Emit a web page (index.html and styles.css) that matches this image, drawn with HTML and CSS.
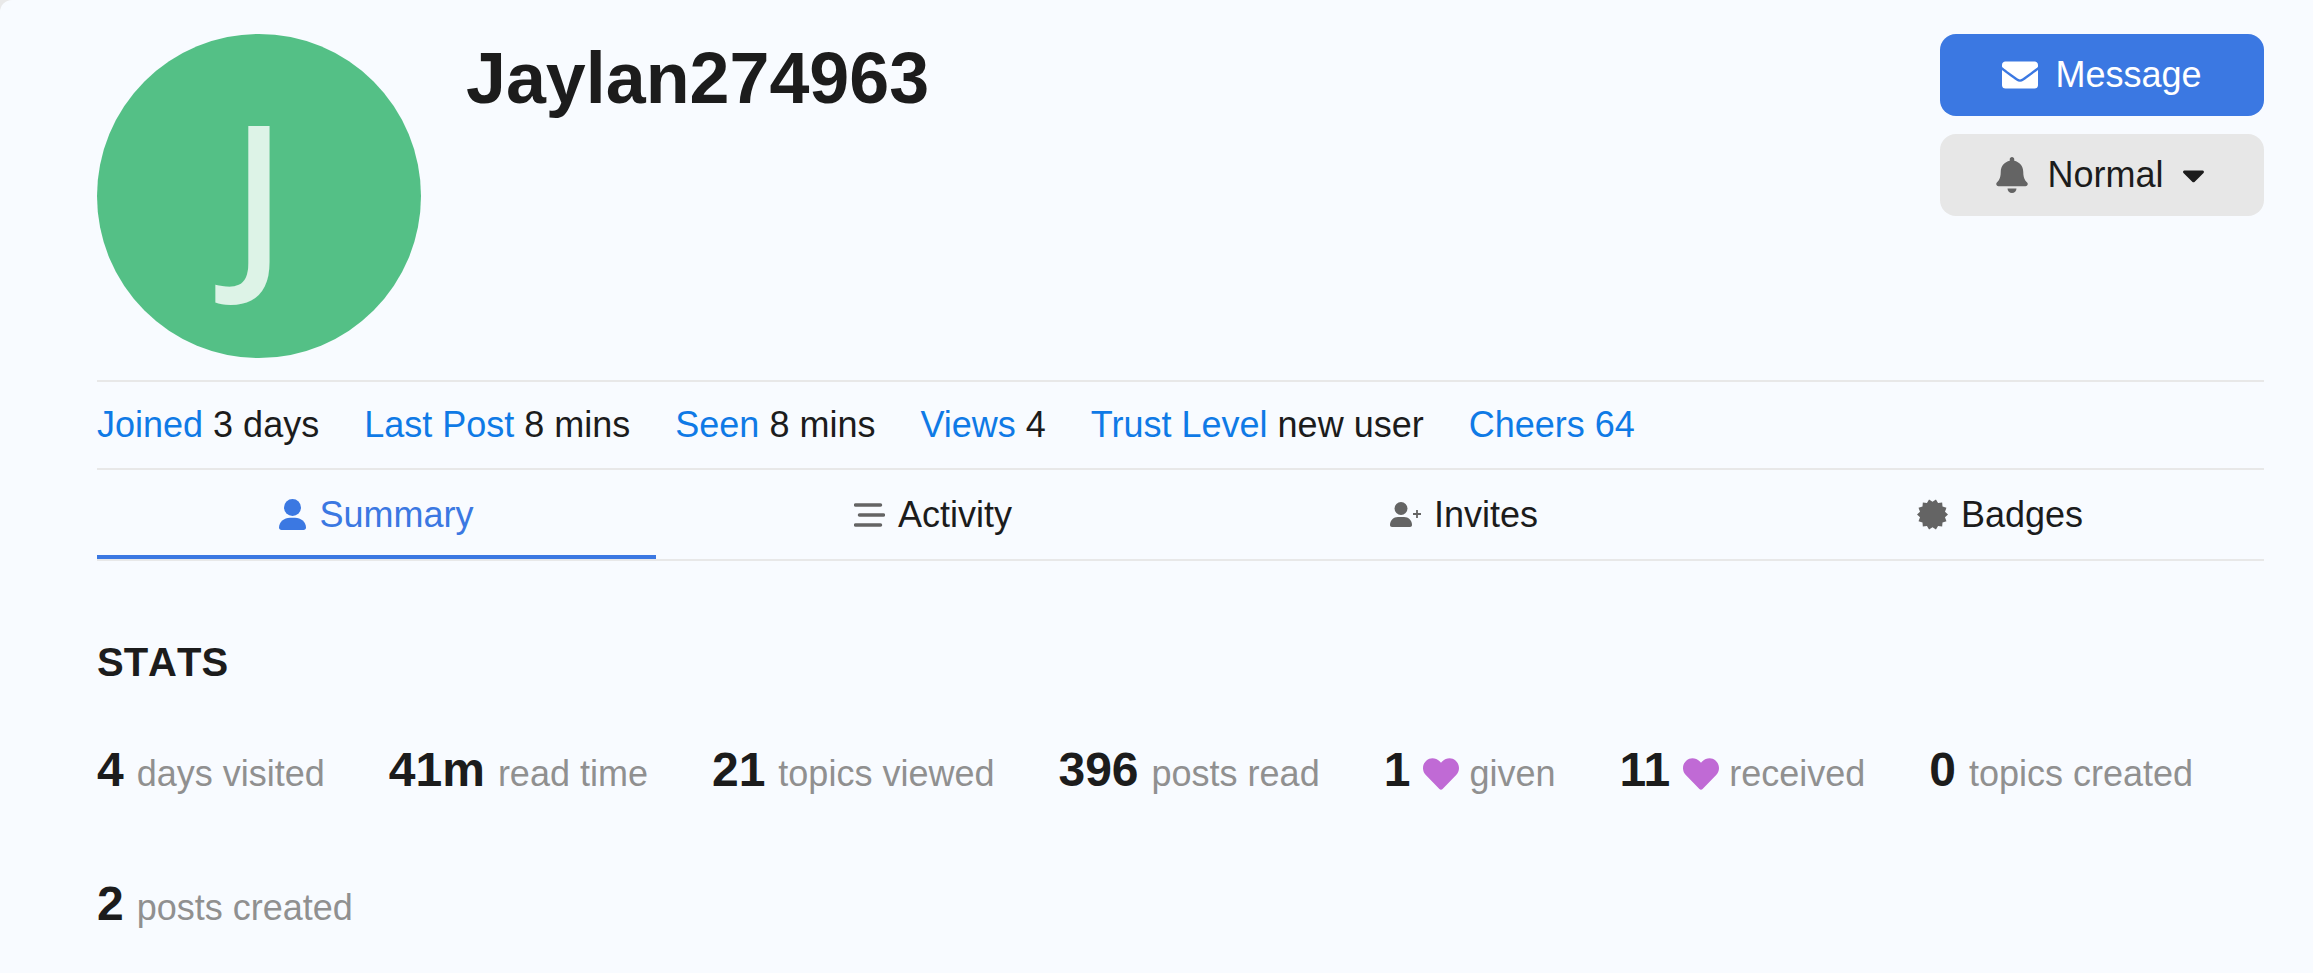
FILE: index.html
```html
<!DOCTYPE html>
<html>
  <head>
    <meta charset="utf-8">
    <title>Jaylan274963</title>
    <link rel="stylesheet" href="styles.css">
  </head>
  <body>
    <div class="page">
      <div class="profile-head">
        <div class="avatar">J</div>
        <h1 class="username">Jaylan274963</h1>
        <div class="actions">
          <button class="btn btn-primary">
            <svg class="btn-icon" viewBox="0 0 512 512"><path d="M502.3 190.8c3.9-3.1 9.7-.2 9.7 4.7V400c0 26.5-21.5 48-48 48H48c-26.5 0-48-21.5-48-48V195.6c0-5 5.7-7.8 9.7-4.7 22.4 17.4 52.1 39.5 154.1 113.6 21.1 15.4 56.7 47.8 92.2 47.6 35.7.3 72-32.8 92.3-47.6 102-74.1 131.6-96.3 154-113.7zM256 320c23.2.4 56.6-29.2 73.4-41.4 132.7-96.3 142.8-104.7 173.4-128.7 5.8-4.5 9.2-11.5 9.2-18.9v-19c0-26.5-21.5-48-48-48H48C21.5 64 0 85.5 0 112v19c0 7.4 3.4 14.3 9.2 18.9 30.6 23.9 40.7 32.4 173.4 128.7 16.8 12.2 50.2 41.8 73.4 41.4z"/></svg>
            Message
          </button>
          <button class="btn btn-default">
            <svg class="btn-icon bell" viewBox="0 0 448 512"><path d="M224 512c35.32 0 63.97-28.65 63.97-64H160.03c0 35.35 28.65 64 63.97 64zm215.39-149.71c-19.32-20.76-55.47-51.99-55.47-154.29 0-77.7-54.48-139.9-127.94-155.16V32c0-17.67-14.32-32-31.98-32s-31.98 14.33-31.98 32v20.84C118.56 68.1 64.08 130.3 64.08 208c0 102.3-36.15 133.53-55.47 154.29-6 6.45-8.66 14.16-8.61 21.71.11 16.4 12.98 32 32.1 32h383.8c19.12 0 32-15.6 32.1-32 .05-7.55-2.61-15.27-8.61-21.71z"/></svg>
            Normal
            <svg class="caret" viewBox="0 0 320 512"><path d="M31.3 192h257.3c17.8 0 26.7 21.5 14.1 34.1L174.1 354.8c-7.8 7.8-20.5 7.8-28.3 0L17.2 226.1C4.6 213.5 13.5 192 31.3 192z"/></svg>
          </button>
        </div>
      </div>

      <div class="meta">
        <div><a>Joined</a> 3 days</div>
        <div><a>Last Post</a> 8 mins</div>
        <div><a>Seen</a> 8 mins</div>
        <div><a>Views</a> 4</div>
        <div><a>Trust Level</a> new user</div>
        <div><a>Cheers 64</a></div>
      </div>

      <div class="tabs">
        <div class="tab tab-active">
          <svg class="tab-icon" viewBox="0 0 27 31" width="27" height="31"><circle cx="13.5" cy="8.5" r="8.5"/><path d="M2.5 31C1 31 0 30 0 28.5 0 23 5 18.7 11 18.7h5c6 0 11 4.3 11 9.8 0 1.5-1 2.5-2.5 2.5z"/></svg>
          Summary
        </div>
        <div class="tab">
          <svg class="tab-icon" viewBox="0 0 31 24" width="31" height="24"><path class="bars" d="M1.5 2h25M5.5 12h24M1.5 22h25"/></svg>
          Activity
        </div>
        <div class="tab">
          <svg class="tab-icon" viewBox="0 0 31 25" width="31" height="25"><circle cx="11" cy="6.5" r="6.5"/><path d="M2 25C.8 25 0 24.2 0 23 0 18.5 3.5 15 8 15h6c4.5 0 8 3.5 8 8 0 1.2-.8 2-2 2z"/><path class="plus" d="M27 8v8M23 12h8"/></svg>
          Invites
        </div>
        <div class="tab">
          <svg class="tab-icon" viewBox="-15.5 -15.5 31 31" width="31" height="31"><polygon points="15.5,0 12.48,2.85 13.97,6.73 10.01,7.98 9.66,12.12 5.55,11.53 3.45,15.11 0,12.8 -3.45,15.11 -5.55,11.53 -9.66,12.12 -10.01,7.98 -13.97,6.73 -12.48,2.85 -15.5,0 -12.48,-2.85 -13.97,-6.73 -10.01,-7.98 -9.66,-12.12 -5.55,-11.53 -3.45,-15.11 0,-12.8 3.45,-15.11 5.55,-11.53 9.66,-12.12 10.01,-7.98 13.97,-6.73 12.48,-2.85"/></svg>
          Badges
        </div>
      </div>

      <section class="stats">
        <h3 class="stats-title">STATS</h3>
        <ul class="stats-list">
          <li><b>4</b> days visited</li>
          <li><b>41m</b> read time</li>
          <li><b>21</b> topics viewed</li>
          <li><b>396</b> posts read</li>
          <li><b>1</b> <svg class="heart" viewBox="0 0 512 512"><path d="M462.3 62.6C407.5 15.9 326 24.3 275.7 76.2L256 96.5l-19.7-20.3C186.1 24.3 104.5 15.9 49.7 62.6c-62.8 53.6-66.1 149.8-9.9 207.9l193.5 199.8c12.5 12.9 32.8 12.9 45.3 0l193.5-199.8c56.3-58.1 53-154.3-9.8-207.9z"/></svg> given</li>
          <li><b>11</b> <svg class="heart" viewBox="0 0 512 512"><path d="M462.3 62.6C407.5 15.9 326 24.3 275.7 76.2L256 96.5l-19.7-20.3C186.1 24.3 104.5 15.9 49.7 62.6c-62.8 53.6-66.1 149.8-9.9 207.9l193.5 199.8c12.5 12.9 32.8 12.9 45.3 0l193.5-199.8c56.3-58.1 53-154.3-9.8-207.9z"/></svg> received</li>
          <li><b>0</b> topics created</li>
          <li><b>2</b> posts created</li>
        </ul>
      </section>
    </div>
  </body>
</html>
```

FILE: styles.css
```css
html, body {
  margin: 0;
  height: 100%;
  background: #e9e9e9;
}

.page {
  box-sizing: border-box;
  height: 973px;
  padding: 34px 49px 0 97px;
  overflow: hidden;
  background: #f8fbff;
  border-top-left-radius: 12px;
  color: #1c1c1c;
  font-family: "Liberation Sans", Arial, sans-serif;
  font-size: 36px;
}

.profile-head {
  display: flex;
  align-items: flex-start;
  height: 346px;
  border-bottom: 2px solid #e8e8e8;
}

.avatar {
  width: 324px;
  height: 324px;
  border-radius: 50%;
  background: #54c086;
  color: rgba(255, 255, 255, 0.8);
  font-family: "Noto Sans", sans-serif;
  font-weight: 500;
  font-size: 196px;
  line-height: 312px;
  text-align: center;
  flex-shrink: 0;
}

.username {
  flex: 1;
  margin: 0 0 0 45px;
  font-size: 71.8px;
  line-height: 88px;
  font-weight: bold;
}

.actions {
  display: flex;
  flex-direction: column;
  gap: 18px;
  width: 324px;
}

.btn {
  display: flex;
  align-items: center;
  justify-content: center;
  height: 82px;
  border: 0;
  border-radius: 16px;
  font: inherit;
}

.btn-primary {
  background: #3b78e2;
  color: #fff;
}

.btn-primary .btn-icon {
  width: 36px;
  height: 36px;
  margin-right: 17px;
  fill: #fff;
}

.btn-default {
  background: #e7e7e7;
  color: #1c1c1c;
}

.btn-default .btn-icon {
  width: 32px;
  height: 36px;
  margin-right: 19px;
  fill: #646464;
}

.caret {
  width: 23px;
  height: 36px;
  margin-left: 18px;
  margin-right: 3px;
  fill: #1c1c1c;
}

.meta {
  display: flex;
  gap: 45px;
  height: 86px;
  align-items: center;
  border-bottom: 2px solid #e8e8e8;
}

.meta a {
  color: #0f7ae6;
}

.tabs {
  display: grid;
  grid-template-columns: 559px 554px 508px 546px;
  height: 89px;
  border-bottom: 2px solid #e8e8e8;
}

.tab {
  display: flex;
  align-items: center;
  justify-content: center;
  gap: 13px;
}

.tab:last-child {
  padding-left: 18px;
}

.tab-active {
  box-shadow: inset 0 -4px 0 #3b78e2;
  color: #3b78e2;
}

.tab-icon {
  fill: #646464;
}

.tab-active .tab-icon {
  fill: #3b78e2;
}

.bars {
  fill: none;
  stroke: #646464;
  stroke-width: 3.5;
  stroke-linecap: round;
}

.plus {
  fill: none;
  stroke: #646464;
  stroke-width: 1.8;
}

.stats-title {
  margin: 78px 0 0;
  font-size: 40px;
  line-height: 46px;
  font-weight: bold;
  font-kerning: none;
}

.stats-list {
  display: flex;
  flex-wrap: wrap;
  list-style: none;
  margin: 58px 0 0;
  padding: 0;
  color: #909090;
  line-height: 54px;
  column-gap: 64px;
  row-gap: 76px;
}

.stats-list b {
  color: #1c1c1c;
  font-size: 48px;
  margin-right: 3px;
}

.heart {
  width: 36px;
  height: 36px;
  margin-bottom: -6px;
  fill: #c06ad5;
}
```
